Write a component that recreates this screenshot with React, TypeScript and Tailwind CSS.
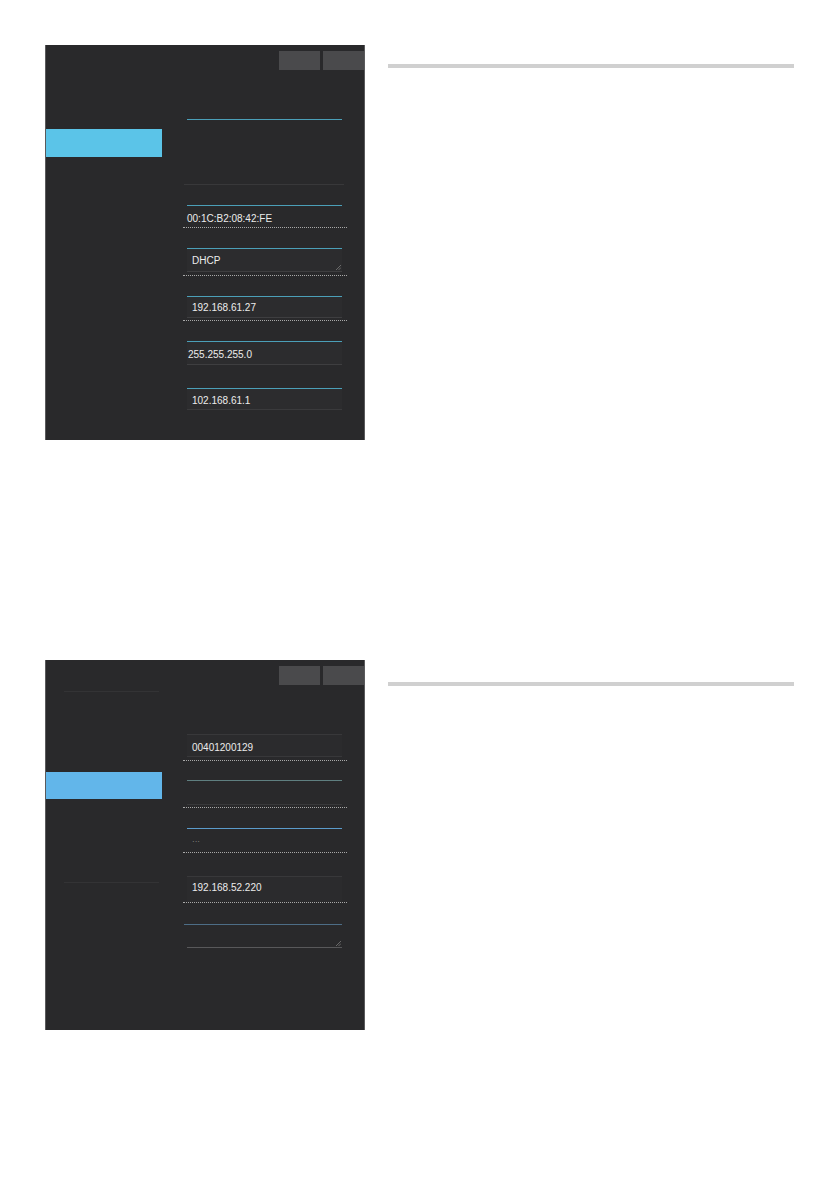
import React from "react";

const font = { fontFamily: '"Liberation Sans", Arial, sans-serif' };

function Handle() {
  return (
    <svg width="5" height="5" viewBox="0 0 5 5" className="absolute right-[1px] bottom-[1px]">
      <line x1="5" y1="0" x2="0" y2="5" stroke="#7a7a7a" strokeWidth="0.8" />
      <line x1="5" y1="2.5" x2="2.5" y2="5" stroke="#7a7a7a" strokeWidth="0.8" />
    </svg>
  );
}

function Buttons() {
  return (
    <div className="flex justify-end gap-[3px] pt-[6px]">
      <div className="w-[41px] h-[19px] bg-[#4a4a4c]" />
      <div className="w-[41px] h-[19px] bg-[#4a4a4c]" />
    </div>
  );
}

function Dotted({ mt }: { mt: string }) {
  return <div className={`${mt} -ml-[4px] w-[164px] h-0 border-t border-dotted border-[#a8a8a8]`} />;
}

function Panel1() {
  return (
    <div className="w-[320px] h-[395px] bg-[#29292b] border-x border-[#5a5a5c] flex shrink-0">
      <div className="w-[116px] shrink-0">
        <div className="mt-[84px] h-[28px] bg-[#5bc4e8]" />
      </div>
      <div className="flex-1 flex flex-col">
        <Buttons />
        <div className="ml-[25px] w-[155px] flex flex-col text-[10px] leading-[10px] text-[#ececec]">
          <div className="mt-[49px] h-px bg-[#4b9fb8]" />
          <div className="mt-[64px] -ml-[3px] w-[160px] h-px bg-[#38383a]" />
          <div className="mt-[20px] h-px bg-[#4b9fb8]" />
          <div className="h-[21px] pt-[8px]">00:1C:B2:08:42:FE</div>
          <Dotted mt="mt-0" />
          <div className="mt-[20px] h-px bg-[#4b9fb8]" />
          <div className="relative h-[23px] pt-[7px] pl-[5px] bg-[#2c2c2e] border-b border-[#3e3e40]">
            DHCP
            <Handle />
          </div>
          <Dotted mt="mt-[3px]" />
          <div className="mt-[20px] h-px bg-[#4b9fb8]" />
          <div className="h-[21px] pt-[6px] pl-[5px] bg-[#2c2c2e] border-b border-[#3e3e40]">192.168.61.27</div>
          <Dotted mt="mt-[2px]" />
          <div className="mt-[20px] h-px bg-[#4b9fb8]" />
          <div className="h-[23px] pt-[8px] pl-[1px] bg-[#2c2c2e] border-b border-[#3e3e40]">255.255.255.0</div>
          <div className="mt-[23px] h-px bg-[#4b9fb8]" />
          <div className="h-[21px] pt-[7px] pl-[5px] bg-[#2c2c2e] border-b border-[#3a3a3c]">102.168.61.1</div>
        </div>
      </div>
    </div>
  );
}

function Panel2() {
  return (
    <div className="w-[320px] h-[370px] bg-[#29292b] border-x border-[#5a5a5c] flex shrink-0">
      <div className="w-[116px] shrink-0 flex flex-col">
        <div className="mt-[31px] ml-[18px] w-[95px] h-px bg-[#333335]" />
        <div className="mt-[80px] h-[27px] bg-[#62b6ea]" />
        <div className="mt-[83px] ml-[18px] w-[95px] h-px bg-[#333335]" />
      </div>
      <div className="flex-1 flex flex-col">
        <Buttons />
        <div className="ml-[25px] w-[155px] flex flex-col text-[10px] leading-[10px] text-[#ececec]">
          <div className="mt-[49px] h-px bg-[#38383a]" />
          <div className="h-[22px] pt-[8px] pl-[5px] bg-[#2b2b2d] border-b border-[#38383a]">00401200129</div>
          <Dotted mt="mt-[3px]" />
          <div className="mt-[19px] h-px bg-[#5f7f80]" />
          <div className="h-[24px] border-b border-[#38383a]" />
          <Dotted mt="mt-[2px]" />
          <div className="mt-[20px] h-px bg-[#5b9bcb]" />
          <div className="h-[23px] pt-[9px] pl-[5px] text-[8px] leading-[8px] text-[#9a9a9a]">···</div>
          <Dotted mt="mt-0" />
          <div className="mt-[23px] h-px bg-[#38383a]" />
          <div className="h-[25px] pt-[6px] pl-[5px] bg-[#2b2b2d]">192.168.52.220</div>
          <Dotted mt="mt-0" />
          <div className="mt-[21px] -ml-[3px] w-[158px] h-px bg-[#4d6d86]" />
          <div className="relative h-[23px] border-b border-[#58585a]">
            <Handle />
          </div>
        </div>
      </div>
    </div>
  );
}

export default function App() {
  return (
    <div className="w-[839px] h-[1191px] bg-white overflow-hidden" style={font}>
      <div className="flex pl-[45px] pt-[45px]">
        <Panel1 />
        <div className="ml-[23px] mt-[19px] w-[406px] h-[4px] bg-[#d0d0d0]" />
      </div>
      <div className="flex pl-[45px] mt-[220px]">
        <Panel2 />
        <div className="ml-[23px] mt-[22px] w-[406px] h-[4px] bg-[#d0d0d0]" />
      </div>
    </div>
  );
}
